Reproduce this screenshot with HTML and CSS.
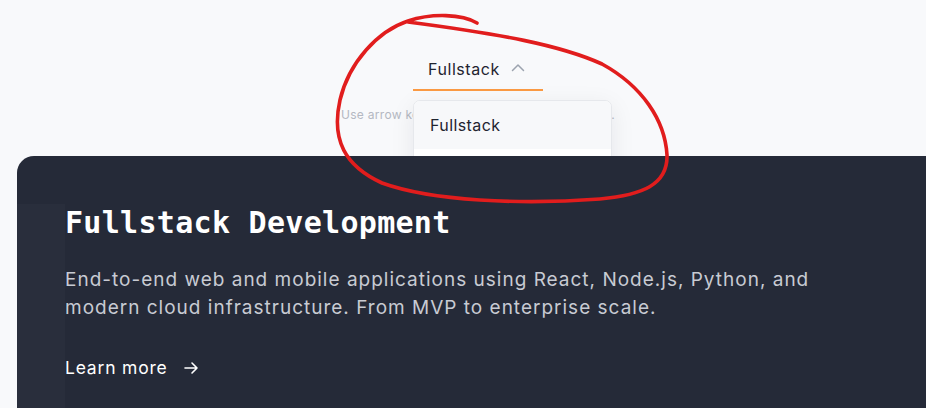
FILE: index.html
```html
<!DOCTYPE html>
<html lang="en">
<head>
<meta charset="utf-8">
<title>Services</title>
<link rel="stylesheet" href="styles.css">
</head>
<body>
<div class="page">
  <section class="picker">
    <div class="tab-wrap">
      <button class="tab">
        <span class="tab-label">Fullstack</span>
        <svg class="chev" width="14" height="9" viewBox="0 0 14 9"><path d="M1.5 7.5 L7 2 L12.5 7.5" fill="none" stroke="#9ca3af" stroke-width="1.5" stroke-linecap="round" stroke-linejoin="round"/></svg>
      </button>
      <div class="menu">
        <div class="menu-item active">Fullstack</div>
        <div class="menu-item">Mobile</div>
      </div>
    </div>
    <p class="hint">Use arrow keys to navigate between services.</p>
  </section>
  <section class="card">
    <div class="strip"></div>
    <div class="card-body">
      <h1 class="title">Fullstack Development</h1>
      <p class="desc">End-to-end web and mobile applications using React, Node.js, Python, and modern cloud infrastructure. From MVP to enterprise scale.</p>
      <a class="more" href="#">Learn more
        <svg width="16" height="14" viewBox="0 0 16 14"><path d="M2 7 H14 M9 2 L14 7 L9 12" fill="none" stroke="#ffffff" stroke-width="1.6" stroke-linecap="round" stroke-linejoin="round"/></svg>
      </a>
    </div>
  </section>
  <svg class="scribble" width="926" height="408" viewBox="0 0 926 408"><path d="M477,23 C462,14 432,13 408,21 C378,31 349,62 340,100 C331,140 345,166 382,183 C432,201 520,205 600,199 C642,195 668,185 667,155 C665,120 642,86 602,64 C560,45 500,34 408,22" fill="none" stroke="#e11d1d" stroke-width="3.6" stroke-linecap="round" stroke-linejoin="round"/></svg>
</div>
</body>
</html>
```
FILE: styles.css
```css
* { box-sizing: border-box; }
html, body { margin: 0; padding: 0; }
body {
  background: #f8f9fb;
  font-family: "Inter", "Noto Sans", sans-serif;
  overflow: hidden;
}
.page {
  position: relative;
  width: 926px;
  height: 408px;
  overflow: hidden;
}
.picker {
  height: 156px;
  padding-top: 50px;
  padding-left: 30px;
  display: flex;
  flex-direction: column;
  align-items: center;
}
.tab-wrap {
  position: relative;
  width: 130px;
}
.tab {
  width: 130px;
  height: 41px;
  display: flex;
  align-items: center;
  gap: 11px;
  padding: 0 0 2px 15px;
  background: transparent;
  border: none;
  border-bottom: 2px solid #fb9a43;
  font-family: inherit;
  font-size: 16px;
  letter-spacing: 0.55px;
  color: #1f2430;
  cursor: pointer;
}
.chev { margin-top: -2px; }
.menu {
  position: absolute;
  top: 50px;
  left: 0;
  width: 199px;
  background: #ffffff;
  border: 1px solid #e6e8ec;
  border-radius: 7px;
  box-shadow: 0 6px 24px rgba(20, 25, 40, 0.08);
  overflow: hidden;
  z-index: 1;
}
.menu-item {
  height: 48px;
  display: flex;
  align-items: center;
  padding-left: 16px;
  font-size: 16px;
  letter-spacing: 0.4px;
  color: #1f2430;
  background: #ffffff;
}
.menu-item.active { background: #f7f8fa; }
.hint {
  margin: 16px 0 0;
  font-size: 12px;
  letter-spacing: 0.3px;
  color: #b4b8c2;
}
.card {
  position: relative;
  z-index: 2;
  margin-left: 17px;
  height: 252px;
  background: #252a38;
  border-top-left-radius: 17px;
  padding-top: 48px;
  display: flex;
}
.strip {
  width: 48px;
  flex: none;
  background: #292e3c;
}
.card-body { flex: 1; }
.title {
  margin: 0;
  padding-top: 1px;
  font-family: "DejaVu Sans Mono", "Liberation Mono", monospace;
  font-weight: bold;
  font-size: 30px;
  line-height: 36px;
  color: #ffffff;
  letter-spacing: 0.3px;
}
.desc {
  margin: 25px 0 0;
  max-width: 775px;
  font-size: 19px;
  line-height: 28px;
  letter-spacing: 1px;
  color: #c8cbd3;
}
.more {
  margin-top: 34px;
  display: inline-flex;
  align-items: center;
  gap: 15px;
  font-size: 17.5px;
  line-height: 24px;
  letter-spacing: 0.8px;
  color: #ffffff;
  text-decoration: none;
}
.scribble {
  position: absolute;
  left: 0;
  top: 0;
  z-index: 5;
  pointer-events: none;
}
```
